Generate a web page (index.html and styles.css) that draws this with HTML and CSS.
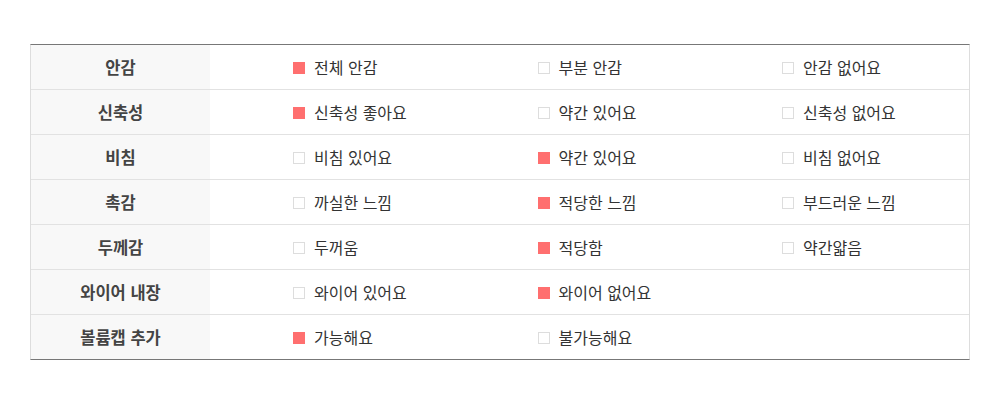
FILE: index.html
```html
<!DOCTYPE html>
<html lang="ko">
<head>
<meta charset="utf-8">
<link rel="stylesheet" href="styles.css">
</head>
<body>
<div class="table">
  <div class="row">
    <div class="head">안감</div>
    <div class="opts">
      <div class="opt"><span class="box on"></span>전체 안감</div>
      <div class="opt"><span class="box"></span>부분 안감</div>
      <div class="opt"><span class="box"></span>안감 없어요</div>
    </div>
  </div>
  <div class="row">
    <div class="head">신축성</div>
    <div class="opts">
      <div class="opt"><span class="box on"></span>신축성 좋아요</div>
      <div class="opt"><span class="box"></span>약간 있어요</div>
      <div class="opt"><span class="box"></span>신축성 없어요</div>
    </div>
  </div>
  <div class="row">
    <div class="head">비침</div>
    <div class="opts">
      <div class="opt"><span class="box"></span>비침 있어요</div>
      <div class="opt"><span class="box on"></span>약간 있어요</div>
      <div class="opt"><span class="box"></span>비침 없어요</div>
    </div>
  </div>
  <div class="row">
    <div class="head">촉감</div>
    <div class="opts">
      <div class="opt"><span class="box"></span>까실한 느낌</div>
      <div class="opt"><span class="box on"></span>적당한 느낌</div>
      <div class="opt"><span class="box"></span>부드러운 느낌</div>
    </div>
  </div>
  <div class="row">
    <div class="head">두께감</div>
    <div class="opts">
      <div class="opt"><span class="box"></span>두꺼움</div>
      <div class="opt"><span class="box on"></span>적당함</div>
      <div class="opt"><span class="box"></span>약간얇음</div>
    </div>
  </div>
  <div class="row">
    <div class="head">와이어 내장</div>
    <div class="opts">
      <div class="opt"><span class="box"></span>와이어 있어요</div>
      <div class="opt"><span class="box on"></span>와이어 없어요</div>
    </div>
  </div>
  <div class="row">
    <div class="head">볼륨캡 추가</div>
    <div class="opts">
      <div class="opt"><span class="box on"></span>가능해요</div>
      <div class="opt"><span class="box"></span>불가능해요</div>
    </div>
  </div>
</div>
</body>
</html>
```

FILE: styles.css
```css
html, body {
  margin: 0;
  padding: 0;
  background: #fff;
}
body {
  font-family: "Noto Sans CJK KR", "Noto Sans", sans-serif;
  color: #333;
  padding-top: 44px;
}
.table {
  margin-left: 30px;
  width: 940px;
  box-sizing: border-box;
  border-top: 1px solid #777;
  border-bottom: 1px solid #777;
  border-left: 1px solid #ddd;
  border-right: 1px solid #ddd;
}
.row {
  display: flex;
  height: 45px;
  border-top: 1px solid #e2e2e2;
  box-sizing: border-box;
}
.row:first-child {
  border-top: none;
  height: 44px;
}
.head {
  width: 179px;
  flex: none;
  background: #f8f8f8;
  display: flex;
  align-items: center;
  justify-content: center;
  font-size: 16.5px;
  font-weight: 700;
  color: #444;
  padding-bottom: 1px;
  box-sizing: border-box;
}
.opts {
  display: flex;
  align-items: center;
  padding-left: 83px;
}
.opt {
  width: 244.5px;
  display: flex;
  align-items: center;
  font-size: 16px;
  color: #333;
  padding-bottom: 1px;
}
.box {
  width: 12px;
  height: 12px;
  box-sizing: border-box;
  border: 1px solid #ddd;
  margin-right: 9px;
  background: #fff;
  position: relative;
  top: 1px;
}
.box.on {
  background: #ff6f6f;
  border-color: #ff6f6f;
}
```
